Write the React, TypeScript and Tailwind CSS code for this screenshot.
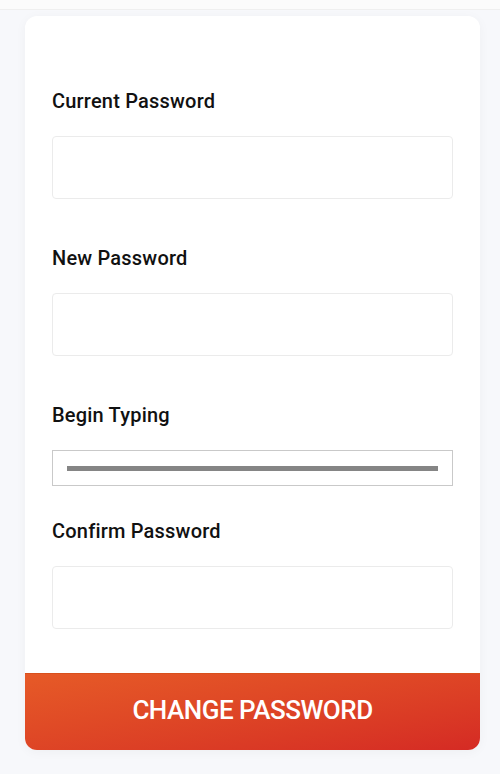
const fields = [
  { label: 'Current Password', gapAfter: 'mb-[47px]' },
  { label: 'New Password', gapAfter: 'mb-[47px]' },
]

function Field({ label, className }: { label: string; className?: string }) {
  return (
    <div className={className}>
      <label className="block h-6 text-[20px] leading-6 font-medium tracking-[0.2px] text-[#111]">{label}</label>
      <input
        type="password"
        className="mt-[23px] block h-[63px] w-full rounded-[4px] border border-[#ebebeb] bg-white outline-none"
      />
    </div>
  )
}

export default function App() {
  return (
    <div className="min-h-screen bg-[#f7f8fb]" style={{ fontFamily: 'Roboto, "Open Sans", sans-serif' }}>
      <div className="h-[10px] border-b border-[#efefef] bg-[#fbfbfb]" />
      <div className="ml-[25px] mr-[20px] mt-[6px] overflow-hidden rounded-xl bg-white shadow-[0_2px_12px_rgba(0,0,0,0.04)]">
        <div className="px-[27px] pt-[73px]">
          {fields.map((f) => (
            <Field key={f.label} label={f.label} className={f.gapAfter} />
          ))}

          <div className="mb-[33px]">
            <div className="h-6 text-[20px] leading-6 font-medium tracking-[0.2px] text-[#111]">Begin Typing</div>
            <div className="mt-[23px] flex h-9 items-center border border-[#c9c9c9] px-[14px]">
              <div className="h-[5px] w-full bg-[#858585]" />
            </div>
          </div>

          <Field label="Confirm Password" className="pb-[44px]" />
        </div>

        <button className="flex h-[77px] w-full items-center justify-center border-t border-[#d8501c] bg-gradient-to-br from-[#e65a27] to-[#d52a24] pb-[3px] text-[26px] font-medium tracking-[-0.5px] text-white">
          CHANGE PASSWORD
        </button>
      </div>
    </div>
  )
}
